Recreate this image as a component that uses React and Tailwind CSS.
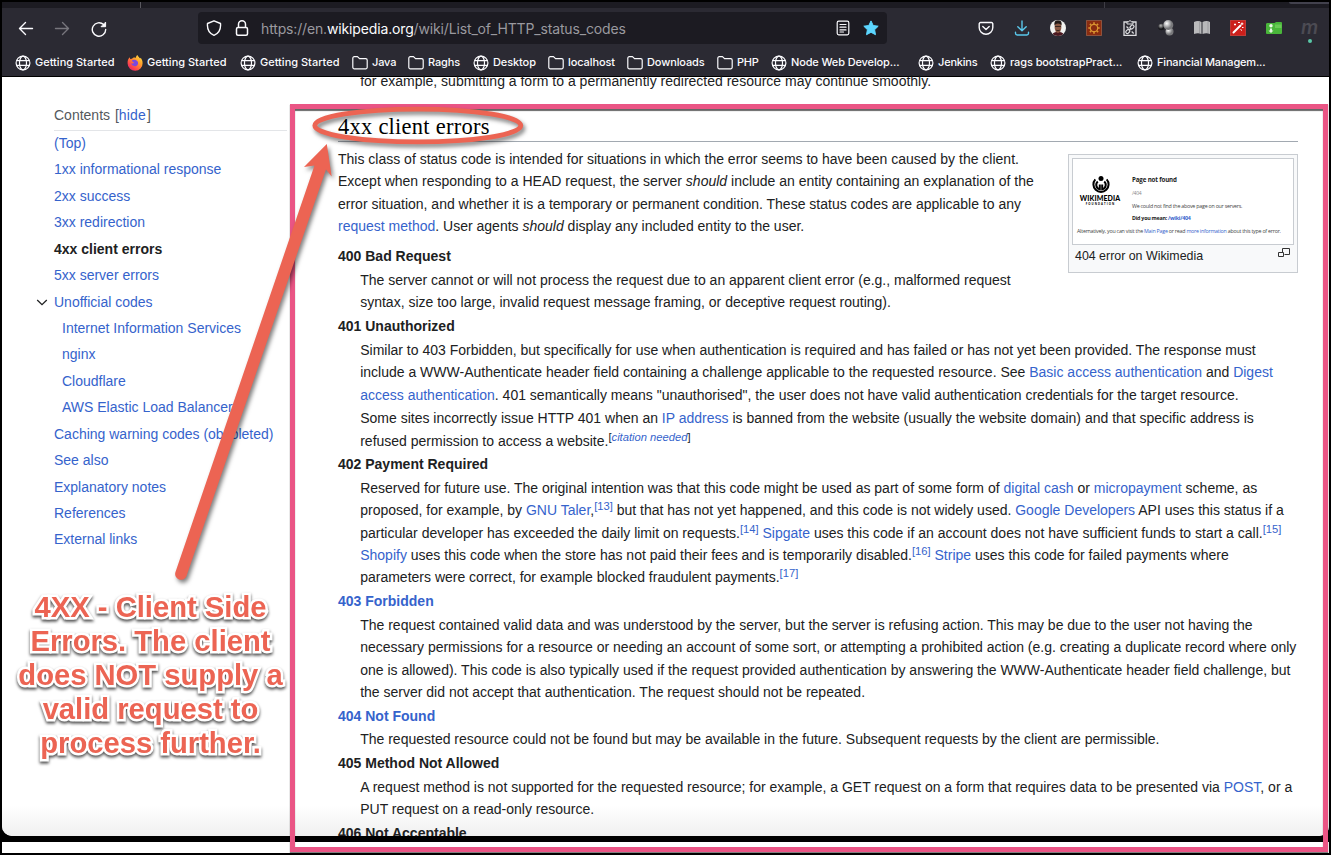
import React from 'react';

const A = ({ children }) => <span className="text-[#3563cc]">{children}</span>;
const Sup = ({ children }) => (
  <sup className="relative -top-[5px] align-baseline text-[11.2px] leading-none text-[#3563cc]">{children}</sup>
);
const L = ({ children }) => <div className="h-[22.35px] whitespace-nowrap leading-[22.35px]">{children}</div>;
const Dt = ({ children, link }) => (
  <dt className={link ? 'mb-[1.4px] h-[22.35px] leading-[22.35px] font-bold text-[#3563cc]' : 'mb-[1.4px] h-[22.35px] leading-[22.35px] font-bold'}>{children}</dt>
);
const Dd = ({ children }) => <dd className="mb-[1.4px] ml-[22.2px]">{children}</dd>;

const Globe = () => (
  <svg className="size-4 shrink-0" viewBox="0 0 16 16" fill="none" stroke="#fbfbfe" strokeWidth="1.2">
    <circle cx="8" cy="8" r="6.9" />
    <ellipse cx="8" cy="8" rx="3.5" ry="6.9" />
    <path d="M1.600 5.700h12.800M1.600 10.300h12.800" />
  </svg>
);
const Folder = () => (
  <svg className="size-4 shrink-0" viewBox="0 0 16 16" fill="none" stroke="#fbfbfe" strokeWidth="1.2" strokeLinejoin="round">
    <path d="M.8 3.200A1.500 1.500 0 0 1 2.300 1.700H5.500L7.500 3.700H13.700A1.500 1.500 0 0 1 15.200 5.200V12.300A1.500 1.500 0 0 1 13.700 13.800H2.300A1.500 1.500 0 0 1 .8 12.300Z" />
  </svg>
);
const Firefox = () => (
  <svg className="size-4 shrink-0" viewBox="0 0 16 16">
    <defs>
      <linearGradient id="fx" x1="1" y1="0" x2="0.200" y2="1">
        <stop offset="0" stopColor="#fff04a" />
        <stop offset=".4" stopColor="#ffa02a" />
        <stop offset=".75" stopColor="#ff4a4a" />
        <stop offset="1" stopColor="#e2206c" />
      </linearGradient>
    </defs>
    <path fill="url(#fx)" d="M.6 8.500C.4 6 1.300 3.500 2.600 2.300L3.200 4 5 3.800C6 2.500 8 2.300 9 3 8.800 1.800 9.500.6 10.500 0c.3 1.500 1.700 2.300 2.700 3.500l.5-.7c1.200 1.400 1.900 3.200 1.900 5.400A7.500 7.500 0 0 1 .6 8.500Z" />
    <path fill="#7a48e0" d="M5 5.200c1.500-1 4.500-.6 5.600 1.200 1.200 2.200-.1 4.700-2.600 4.800-2 .1-3.700-1.300-3.700-3.100 1 .8 2.300.6 3-.3L5.600 7Z" />
  </svg>
);

const bookmarks = [
  [Globe, 'Getting Started', 'w-[112px]'],
  [Firefox, 'Getting Started', 'w-[113px]'],
  [Globe, 'Getting Started', 'w-[112px]'],
  [Folder, 'Java', 'w-[56px] tracking-[-0.15px]'],
  [Folder, 'Raghs', 'w-[65px] tracking-[-0.1px]'],
  [Globe, 'Desktop', 'w-[75px] tracking-[-0.1px]'],
  [Folder, 'localhost', 'w-[79px] tracking-[-0.1px]'],
  [Folder, 'Downloads', 'w-[90px] tracking-[-0.12px]'],
  [Folder, 'PHP', 'w-[54px] tracking-[-0.2px]'],
  [Globe, 'Node Web Develop...', 'w-[147px] tracking-[-0.13px]'],
  [Globe, 'Jenkins', 'w-[72px] tracking-[-0.2px]'],
  [Globe, 'rags bootstrapPract...', 'w-[147px] tracking-[-0.1px]'],
  [Globe, 'Financial Managem...', 'w-[140px] tracking-[-0.18px]'],
];

const Extensions = () => (
  <div className="ml-auto mr-[11px] flex items-center gap-5 pb-px">
    <svg className="size-4" viewBox="0 0 16 16" fill="none" stroke="#fbfbfe" strokeWidth="1.400" strokeLinecap="round" strokeLinejoin="round">
      <path d="M2.500 2.500h11a1.300 1.300 0 0 1 1.300 1.300V7.500a6.800 6.800 0 0 1-13.600 0V3.800A1.300 1.300 0 0 1 2.500 2.500ZM4.800 6.500 8 9.500l3.200-3" />
    </svg>
    <svg className="size-4" viewBox="0 0 16 16" fill="none" stroke="#5ac8ec" strokeWidth="1.400" strokeLinecap="round" strokeLinejoin="round">
      <path d="M8 1v9.500M3.800 6.700 8 10.800l4.200-4.100M1.500 12.300v1q0 1.700 1.700 1.700h9.600q1.700 0 1.700-1.700v-1" />
    </svg>
    <svg className="size-4" viewBox="0 0 16 16">
      <defs><clipPath id="face"><circle cx="8" cy="8" r="8" /></clipPath></defs>
      <g clipPath="url(#face)">
        <path fill="#f1f2f0" d="M0 0h16v16H0z" />
        <path fill="#4b1820" d="M1.500 16q1-3.500 4.500-4h4q3.500.5 4.500 4z" />
        <ellipse cx="8" cy="7" rx="3.400" ry="6" fill="#8a5944" />
        <path fill="#211815" d="M4.500 5.500Q3.500.4 8 .3q4.500.1 3.500 5.200Q10.500 3.500 8 3.500T4.500 5.500Z" />
        <path stroke="#30201c" strokeWidth=".9" d="M5 6.500h6M6.200 10.200q1.800 1 3.600 0" fill="none" />
      </g>
    </svg>
    <svg className="size-4" viewBox="0 0 16 16">
      <path fill="#8a2c10" stroke="#a0624a" strokeWidth=".8" d="M.4.4h15.200v15.200H.4z" />
      <g stroke="#d99430" fill="none">
        <circle cx="8" cy="8" r="3.700" strokeWidth="1.200" />
        <path strokeWidth="1.600" d="M8 2.300v1.700M8 12v1.700M2.300 8H4M12 8h1.700M3.900 3.900l1.300 1.300M10.800 10.800l1.300 1.300M12.100 3.900l-1.300 1.300M5.200 10.800l-1.300 1.300" />
      </g>
    </svg>
    <svg className="size-4" viewBox="0 0 16 16" fill="none" stroke="#dddde0">
      <path strokeWidth="1.300" d="M2 2h12v13.400H2z" />
      <path fill="#2b2a33" strokeWidth="1" d="M5 4V1.800h1.500Q8-.8 9.500 1.800H11V4z" />
      <g strokeWidth="1.200">
        <rect x="7.700" y="5.500" width="4.500" height="3" rx="1.500" transform="rotate(-45 10 7)" />
        <rect x="3.500" y="9.800" width="4.500" height="3" rx="1.500" transform="rotate(-45 6 11.300)" />
        <path d="m4.500 6.500 2 2M9.700 11.500l2 2M6.800 10.500l2.500-2.500" />
      </g>
    </svg>
    <svg className="size-4" viewBox="0 0 16 16">
      <defs>
        <radialGradient id="ball" cx=".35" cy=".35"><stop offset="0" stopColor="#fff" /><stop offset="1" stopColor="#77777a" /></radialGradient>
        <radialGradient id="dark" cx=".4" cy=".3"><stop offset="0" stopColor="#bbb" /><stop offset="1" stopColor="#17171a" /></radialGradient>
      </defs>
      <circle cx="11.500" cy="11.500" r="4" fill="url(#ball)" />
      <circle cx="3.500" cy="7" r="3.300" fill="url(#dark)" />
      <circle cx="10.300" cy="5" r="5" fill="url(#ball)" />
    </svg>
    <svg className="size-4" viewBox="0 0 16 16">
      <path fill="#b9b9bb" d="M0 2q4-2 7.500 0v12q-3.500-1.500-7.500 0zM8.500 2q4-2 7.500 0v12q-3.500-1.500-7.500 0z" />
      <path stroke="#8c8c90" d="M5.500 2v11M14 2v11" strokeWidth=".6" />
    </svg>
    <svg className="size-4" viewBox="0 0 16 16">
      <path fill="#cc1f1b" stroke="#e4564f" strokeWidth=".6" d="M.3.3h15.400v15.400H.3z" />
      <path stroke="#fff" strokeWidth="2" strokeLinecap="round" d="m3.500 12.500 7-7" />
      <path stroke="#fff" strokeWidth="1" d="M4 4.500h2M5 3.500v2M8 2.500h2M12 2.500v2.500M10.800 3.800h2.600M12 7.500h1.500M10.500 9.500l1.500 1" />
    </svg>
    <svg className="size-4" viewBox="0 0 16 16">
      <path fill="#49b63a" d="M0 4.500q0-1.500 1-1.500h7.500l1.500-1H15q1 0 1 1v10q0 1-1 1H1q-1 0-1-1z" />
      <path fill="#8ade72" d="M9 4.500h6.500V8H9z" opacity=".5" />
      <circle cx="5" cy="5.700" r="1.700" fill="#fff" opacity=".9" />
      <path fill="#fff" d="m5 13-2.500-2.500H4V8.500h2v2h1.500z" opacity=".85" />
    </svg>
    <div className="relative w-4 text-center font-['Inter',sans-serif] text-[19px] font-semibold italic leading-[14px] text-[#4c4b53]">
      <span className="-ml-px">m</span>
      <i className="absolute left-[6px] top-[18px] size-1 rounded-full bg-[#5ac8a8]" />
    </div>
  </div>
);

const toc = [
  '(Top)', '1xx informational response', '2xx success', '3xx redirection', '4xx client errors', '5xx server errors',
  'Unofficial codes', 'Internet Information Services', 'nginx', 'Cloudflare', 'AWS Elastic Load Balancer',
  'Caching warning codes (obsoleted)', 'See also', 'Explanatory notes', 'References', 'External links',
];

export default function App() {
  return (
    <div className="relative flex h-[855px] w-[1331px] flex-col overflow-hidden border-2 border-black bg-black font-['Liberation_Sans',Arial,sans-serif] text-[14px] text-[#202122]">
      <div className="flex h-[834px] shrink-0 flex-col overflow-hidden rounded-b-[10px] bg-white">
        <header className="flex h-[75px] shrink-0 flex-col border-b border-black bg-[#2b2a33]">
          <div className="flex h-[6px] shrink-0 bg-[#1c1b22]">
            <i className="ml-[138px] w-px bg-[#5a5960]" />
            <i className="ml-[963px] w-px bg-[#3e3d45]" />
            <i className="ml-auto h-[2px] w-[40px] rounded-bl bg-[#42414d]" />
          </div>
          <div className="flex h-[41px] shrink-0 items-center">
            <svg className="mb-px ml-4 size-4" viewBox="0 0 16 16" fill="none" stroke="#fbfbfe" strokeWidth="1.400" strokeLinecap="round" strokeLinejoin="round"><path d="M14.500 8.500H1.500M7.500 2.500l-6 6 6 6" /></svg>
            <svg className="mb-px ml-5 size-4" viewBox="0 0 16 16" fill="none" stroke="#77767d" strokeWidth="1.400" strokeLinecap="round" strokeLinejoin="round"><path d="M1.500 8.500h13M8.500 2.500l6 6-6 6" /></svg>
            <svg className="ml-[21px] size-4" viewBox="0 0 16 16" fill="none" stroke="#fbfbfe" strokeWidth="1.400" strokeLinecap="round"><path d="M14.700 8.500A6.700 6.700 0 1 1 12.600 3.600" /><path fill="#fbfbfe" strokeLinejoin="round" strokeWidth="1" d="M14.600 1.500v4.200H10.400Z" /></svg>
            <div className="mb-px ml-[91px] flex h-8 w-[689px] items-center rounded bg-[#1c1b22] px-2">
              <svg className="size-4" viewBox="0 0 16 16" fill="none" stroke="#fbfbfe" strokeWidth="1.400" strokeLinejoin="round"><path d="M8 .8 14.500 3.500C15 9 12.300 13.500 8 15.300 3.700 13.500 1 9 1.500 3.500Z" /></svg>
              <svg className="ml-3 size-4" viewBox="0 0 16 16" fill="none" stroke="#fbfbfe" strokeWidth="1.500"><rect x="2.500" y="7.500" width="11" height="7.700" rx="1.500" /><path d="M4.500 7.500V4.300a3.500 3.500 0 0 1 7 0v3.200" /></svg>
              <div className="ml-[11px] whitespace-nowrap font-['Inter',sans-serif] text-[14px] tracking-[-0.15px] text-[#9a999f]">https://en.<span className="text-[#fbfbfe]">wikipedia.org</span>/wiki/List_of_HTTP_status_codes</div>
              <svg className="ml-auto size-4" viewBox="0 0 16 16" fill="none" stroke="#fbfbfe" strokeWidth="1.200" strokeLinecap="round"><rect x="2.200" y="1.200" width="11.600" height="13.600" rx="1.500" /><path d="M5 4.500h6M5 7.200h6M5 9.900h6M5 12h3.500" /></svg>
              <svg className="ml-3 size-4" viewBox="0 0 16 16" fill="#5cd6ff" stroke="#5cd6ff" strokeLinejoin="round"><path d="m8 .9 2.200 4.600 5 .7-3.600 3.500.9 5L8 12.300l-4.500 2.400.9-5L.8 6.200l5-.7Z" /></svg>
            </div>
            <Extensions />
          </div>
          <div className="flex h-[27px] items-center pl-[13px] font-['Inter',sans-serif] text-[11px] font-medium text-[#fbfbfe]">
            {bookmarks.map(([Icon, label, w], i) => (
              <div key={i} className={`${w} flex shrink-0 items-center gap-1 whitespace-nowrap`}><Icon /><span>{label}</span></div>
            ))}
          </div>
        </header>

        <div className="flex min-h-0 grow bg-linear-to-b from-white from-96% to-[#f0f0f0]">
          <nav className="w-[285px] shrink-0 pl-[52px] pt-[25px]">
            <div className="mb-[-0.8px] h-[29px] border-b border-[#e3e5e8] leading-[27px] text-[#54595d]">Contents <span className="pl-[1px]">[</span><span className="tracking-[0.2px]"><A>hide</A></span><span className="pl-px">]</span></div>
            {toc.map((t, i) => (
              <div key={t} className={`flex h-[26.45px] items-center whitespace-nowrap ${i === 4 ? 'font-bold text-[#202122]' : 'text-[#3563cc]'} ${i > 6 && i < 11 ? 'pl-2' : ''}`}>
                {i === 6 && <svg className="-ml-[18px] mr-[6px] size-3" viewBox="0 0 12 12" fill="none" stroke="#202122" strokeWidth="1.300"><path d="m1.200 4 4.800 4.600L10.800 4" /></svg>}
                {t}
              </div>
            ))}
          </nav>

          <main className="w-[1011px] pl-[51px]">
            <div className="h-[15px] pl-[22.2px] leading-[8px]">for example, submitting a form to a permanently redirected resource may continue smoothly.</div>
            <h2 className="mt-[15px] h-[35px] border-b border-[#a2a9b1] font-['Liberation_Serif',serif] text-[22.500px] leading-[40px] tracking-[0.25px] text-black">4xx client errors</h2>
            <div className="mt-[6px]">
              <aside className="float-right mt-[6px] h-[119px] w-[230px] border border-[#c8ccd1] bg-[#f8f9fa] p-[3px]">
                <div className="h-[87px] border border-[#c8ccd1] bg-white font-['Open_Sans',sans-serif] text-[5.300px] tracking-[-0.230px] text-[#444]">
                  <div className="flex h-[68px]">
                    <div className="ml-[7px] w-[41px] shrink-0 pt-[16px] text-center text-black">
                      <svg className="mx-auto h-[19px] w-[18px]" viewBox="0 0 18 19">
                        <circle cx="9" cy="3.500" r="2.500" />
                        <path fill="none" stroke="#000" strokeWidth="2" d="M3.300 4.300a7.600 7.600 0 1 0 11.400 0" />
                        <path fill="none" stroke="#000" strokeWidth="2" d="M5.800 6.500a4.500 4.500 0 0 0 2 7.800V9.500M12.200 6.500a4.500 4.500 0 0 1-2 7.800V9.500" />
                      </svg>
                      <div className="-ml-px font-['Lato',sans-serif] text-[7px] font-black leading-[9px] tracking-[0.100px]">WIKIMEDIA</div>
                      <div className="text-[2.800px] font-bold leading-[3px] tracking-[1.050px]">FOUNDATION</div>
                    </div>
                    <div className="whitespace-nowrap pl-[11px] pt-[15px] leading-[12.800px]">
                      <div className="text-[6.200px] font-bold tracking-[-0.150px] text-[#222]">Page not found</div>
                      <div className="text-[5px] text-[#888]">/404</div>
                      <div>We could not find the above page on our servers.</div>
                      <div className="font-bold text-[#222]">Did you mean: <A>/wiki/404</A></div>
                    </div>
                  </div>
                  <div className="whitespace-nowrap pl-[4px] leading-[9px]">Alternatively, you can visit the <A>Main Page</A> or read <A>more information</A> about this type of error.</div>
                </div>
                <div className="flex justify-between pl-[3px] pr-[4px] text-[12.400px] leading-[23px]">404 error on Wikimedia
                  <svg className="mt-[3px] h-[10px] w-[12px]" viewBox="0 0 12 10" fill="none" stroke="#333"><path d="M4.500 4.500v-4h7v6h-5M.5 4.500h5v4h-5z" /></svg>
                </div>
              </aside>
              <L>This class of status code is intended for situations in which the error seems to have been caused by the client.</L>
              <L>Except when responding to a HEAD request, the server <i>should</i> include an entity containing an explanation of the</L>
              <L>error situation, and whether it is a temporary or permanent condition. These status codes are applicable to any</L>
              <L><A>request method</A>. User agents <i>should</i> display any included entity to the user.</L>
            </div>
            <dl className="mt-[7.900px]">
              <Dt>400 Bad Request</Dt>
              <Dd><L>The server cannot or will not process the request due to an apparent client error (e.g., malformed request</L><L>syntax, size too large, invalid request message framing, or deceptive request routing).</L></Dd>
              <Dt>401 Unauthorized</Dt>
              <Dd><L>Similar to 403 Forbidden, but specifically for use when authentication is required and has failed or has not yet been provided. The response must</L><L>include a WWW-Authenticate header field containing a challenge applicable to the requested resource. See <A>Basic access authentication</A> and <A>Digest</A></L><L><A>access authentication</A>. 401 semantically means "unauthorised", the user does not have valid authentication credentials for the target resource.</L></Dd>
              <Dd><L>Some sites incorrectly issue HTTP 401 when an <A>IP address</A> is banned from the website (usually the website domain) and that specific address is</L><L>refused permission to access a website.<Sup><span className="text-[#202122]">[</span><i>citation needed</i><span className="text-[#202122]">]</span></Sup></L></Dd>
              <Dt>402 Payment Required</Dt>
              <Dd>
                <L>Reserved for future use. The original intention was that this code might be used as part of some form of <A>digital cash</A> or <A>micropayment</A> scheme, as</L>
                <L>proposed, for example, by <A>GNU Taler</A>,<Sup>[13]</Sup> but that has not yet happened, and this code is not widely used. <A>Google Developers</A> API uses this status if a</L>
                <L>particular developer has exceeded the daily limit on requests.<Sup>[14]</Sup> <A>Sipgate</A> uses this code if an account does not have sufficient funds to start a call.<Sup>[15]</Sup></L>
                <L><A>Shopify</A> uses this code when the store has not paid their fees and is temporarily disabled.<Sup>[16]</Sup> <A>Stripe</A> uses this code for failed payments where</L>
                <L>parameters were correct, for example blocked fraudulent payments.<Sup>[17]</Sup></L>
              </Dd>
              <Dt link>403 Forbidden</Dt>
              <Dd>
                <L>The request contained valid data and was understood by the server, but the server is refusing action. This may be due to the user not having the</L>
                <L>necessary permissions for a resource or needing an account of some sort, or attempting a prohibited action (e.g. creating a duplicate record where only</L>
                <L>one is allowed). This code is also typically used if the request provided authentication by answering the WWW-Authenticate header field challenge, but</L>
                <L>the server did not accept that authentication. The request should not be repeated.</L>
              </Dd>
              <Dt link>404 Not Found</Dt>
              <Dd><L>The requested resource could not be found but may be available in the future. Subsequent requests by the client are permissible.</L></Dd>
              <Dt>405 Method Not Allowed</Dt>
              <Dd><L>A request method is not supported for the requested resource; for example, a GET request on a form that requires data to be presented via <A>POST</A>, or a</L><L>PUT request on a read-only resource.</L></Dd>
              <Dt>406 Not Acceptable</Dt>
            </dl>
          </main>
        </div>
      </div>
      <footer className="mt-[6px] h-[11px] shrink-0 bg-white" />

      <div className="absolute left-[288px] top-[102px] h-[748px] w-[1038px] border-[5px] border-[#ea5585] shadow-[0_1px_1px_#00000080,inset_0_2px_1px_#00000099]" />
      <svg className="absolute -left-[2px] -top-[2px] drop-shadow-[2px_3px_2px_#00000080]" width="600" height="600" fill="none">
        <ellipse cx="417.800" cy="125.500" rx="103" ry="16.400" stroke="#ec6453" strokeWidth="4.800" />
        <path fill="#ec6453" d="M326.800 144 304 167 314.500 165.500 175.500 572A5.500 5.500 0 0 0 186.500 576L326 169.500 331.700 176.500Z" />
      </svg>
      <div className="absolute left-[8px] top-[588px] w-[281px] text-center text-[29.200px] font-bold leading-[34px] text-[#ec6453] [-webkit-text-stroke:5px_white] [paint-order:stroke_fill] drop-shadow-[0_2px_1.500px_#000000b0]">
        4XX - Client Side<br />Errors. The client<br />does NOT supply a<br />valid request to<br />process further.
      </div>
    </div>
  );
}
